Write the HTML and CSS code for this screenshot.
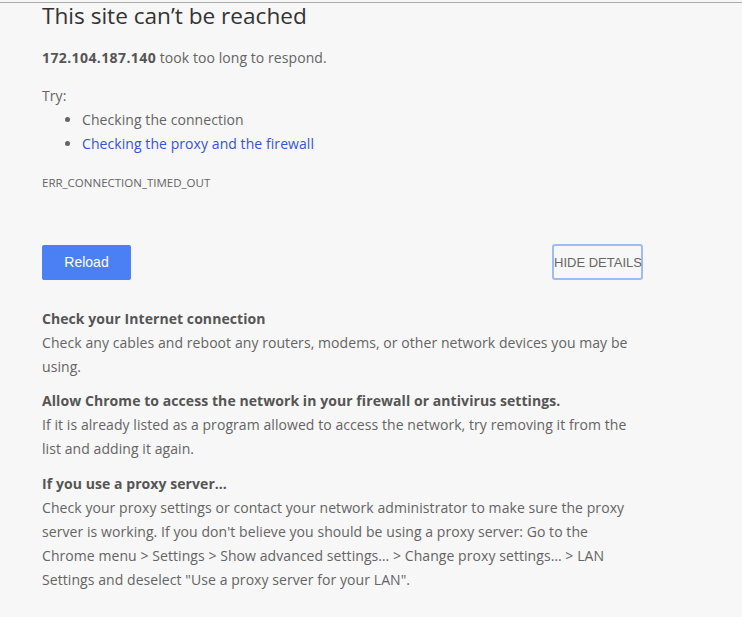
FILE: index.html
```html
<!DOCTYPE html>
<html lang="en">
<head>
    <meta charset="UTF-8">
    <title>172.104.187.140</title>
    <link rel="stylesheet" href="styles.css">
</head>
<body>
    <div class="topline"></div>
    <div class="main">
        <h1>This site can’t be reached</h1>
        <p class="summary"><strong>172.104.187.140</strong> took too long to respond.</p>
        <div class="suggestions">
            <p>Try:</p>
            <ul>
                <li>Checking the connection</li>
                <li><a href="#">Checking the proxy and the firewall</a></li>
            </ul>
        </div>
        <div class="error-code">ERR_CONNECTION_TIMED_OUT</div>

        <div class="nav">
            <button class="reload">Reload</button>
            <button class="details">HIDE DETAILS</button>
        </div>

        <div class="details-list">
            <div class="item">
                <h3>Check your Internet connection</h3>
                <p>Check any cables and reboot any routers, modems, or other network devices you may be using.</p>
            </div>
            <div class="item">
                <h3>Allow Chrome to access the network in your firewall or antivirus settings.</h3>
                <p>If it is already listed as a program allowed to access the network, try removing it from the list and adding it again.</p>
            </div>
            <div class="item">
                <h3>If you use a proxy server…</h3>
                <p>Check your proxy settings or contact your network administrator to make sure the proxy server is working. If you don't believe you should be using a proxy server: Go to the Chrome menu &gt; Settings &gt; Show advanced settings… &gt; Change proxy settings… &gt; LAN Settings and deselect "Use a proxy server for your LAN".</p>
            </div>
        </div>
    </div>
</body>
</html>
```

FILE: styles.css
```css
html { background: #f7f7f7; }
body { margin: 0; font-family: "Open Sans", "Noto Sans", sans-serif; font-size: 14px; letter-spacing: 0.07px; line-height: 24px; color: #646464; }
.topline { height: 1px; margin-top: 2px; background: #ababab; }

.main { width: 600px; margin-left: 42px; }
h1 { margin: 0; font-size: 22.6px; letter-spacing: 0; font-weight: normal; line-height: 26px; color: #333; }
.summary { margin: 17px 0 0; }
.summary strong { color: #555; letter-spacing: 0.4px; }

.suggestions { margin-top: 14px; }
.suggestions p { margin: 0; }
.suggestions ul { margin: 0; padding-left: 40px; }
a { color: #3553d8; text-decoration: none; }

.error-code { margin-top: 15px; font-size: 11.5px; letter-spacing: 0; color: #646464; }

.nav { display: flex; justify-content: space-between; align-items: center; margin-top: 49px; }
button { font-family: Arial, "Liberation Sans", sans-serif; letter-spacing: 0; cursor: pointer; }
.reload { width: 89px; height: 35px; font-size: 14px; background: #4a80f4; color: #fff; border: 0; border-radius: 2px; }
.details { width: 91px; height: 36px; margin-right: -1px; padding: 0; font-size: 13px; white-space: nowrap; background: none; color: #666; border: 2px solid #9dbcf6; border-radius: 3px; }

.details-list { margin-top: 27px; }
.item { margin-bottom: 10px; }
.item:nth-child(2) { margin-bottom: 11px; }
.item h3 { margin: 0; font-size: 14px; font-weight: bold; color: #555; }
.item p { margin: 0; }
```
